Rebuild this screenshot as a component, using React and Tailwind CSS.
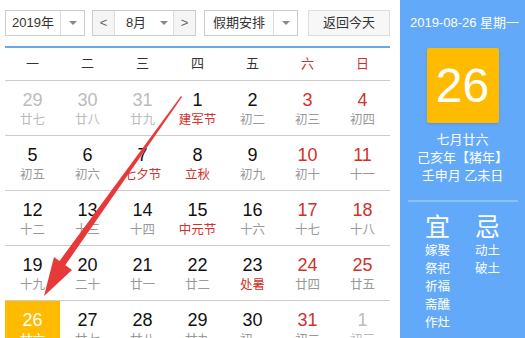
import React from 'react'

const FONT = { fontFamily: '"Microsoft YaHei", "Liberation Sans", "Noto Sans CJK SC", sans-serif' }

const weeks = [
  [['29', '廿七', 'o'], ['30', '廿八', 'o'], ['31', '廿九', 'o'], ['1', '建军节', 'f'], ['2', '初二'], ['3', '初三', 'w'], ['4', '初四', 'w']],
  [['5', '初五'], ['6', '初六'], ['7', '七夕节', 'f'], ['8', '立秋', 'f'], ['9', '初九'], ['10', '初十', 'w'], ['11', '十一', 'w']],
  [['12', '十二'], ['13', '十三'], ['14', '十四'], ['15', '中元节', 'f'], ['16', '十六'], ['17', '十七', 'w'], ['18', '十八', 'w']],
  [['19', '十九'], ['20', '二十'], ['21', '廿一'], ['22', '廿二'], ['23', '处暑', 'f'], ['24', '廿四', 'w'], ['25', '廿五', 'w']],
  [['26', '廿六', 't'], ['27', '廿七'], ['28', '廿八'], ['29', '廿九'], ['30', '初一'], ['31', '初二', 'w'], ['1', '初三', 'o']],
]

function Caret() {
  return <span className="w-0 h-0 border-l-[4px] border-r-[4px] border-t-[4px] border-l-transparent border-r-transparent border-t-[#888]" />
}

function DayCell({ d }) {
  const [num, lunar, kind] = d
  const numColor = kind === 'o' ? 'text-[#bbb]' : kind === 'w' ? 'text-[#d0312d]' : kind === 't' ? 'text-white' : 'text-[#111]'
  const lunarColor = kind === 'o' ? 'text-[#bbb]' : kind === 'f' ? 'text-[#d0312d]' : kind === 't' ? 'text-white' : 'text-[#999]'
  return (
    <div className={`flex flex-col items-center pt-[8px] ${kind === 't' ? 'bg-[#ffbb00]' : ''}`}>
      <div className={`text-[18px] leading-[22px] ${numColor}`}>{num}</div>
      <div className={`text-[12.5px] leading-[18px] ${lunarColor}`}>{lunar}</div>
    </div>
  )
}

export default function App() {
  return (
    <div className="w-[525px] h-[338px] overflow-hidden bg-white flex relative" style={FONT}>
      <div className="w-[400px] pl-[5px] pr-[10px] pt-[10px]">
        {/* toolbar */}
        <div className="flex items-center text-[13px] text-[#333] h-[26px]">
          <div className="w-[80px] h-[26px] border border-[#ccc] flex">
            <div className="flex-1 flex items-center justify-center">2019年</div>
            <div className="w-[24px] border-l border-[#ddd] flex items-center justify-center"><Caret /></div>
          </div>
          <div className="ml-[7px] w-[104px] h-[26px] border border-[#ccc] flex">
            <div className="w-[22px] bg-[#f5f5f5] border-r border-[#ddd] flex items-center justify-center text-[#666]">&lt;</div>
            <div className="flex-1 flex items-center justify-center gap-[14px] pl-[6px]">8月<Caret /></div>
            <div className="w-[22px] bg-[#f5f5f5] border-l border-[#ddd] flex items-center justify-center text-[#666]">&gt;</div>
          </div>
          <div className="ml-[8px] w-[94px] h-[26px] border border-[#ccc] flex">
            <div className="flex-1 flex items-center justify-center">假期安排</div>
            <div className="w-[24px] border-l border-[#ddd] flex items-center justify-center"><Caret /></div>
          </div>
          <div className="ml-[10px] w-[82px] h-[26px] border border-[#ddd] bg-[#f7f7f7] flex items-center justify-center">返回今天</div>
        </div>
        <div className="mt-[10px] border-t-[2px] border-[#6aa8e8]" />
        {/* weekday header */}
        <div className="grid grid-cols-7 h-[33px] items-center text-[13px] border-b border-[#ccc]">
          {['一', '二', '三', '四', '五', '六', '日'].map((w, i) => (
            <div key={w} className={`text-center ${i >= 5 ? 'text-[#d0312d]' : 'text-[#333]'}`}>{w}</div>
          ))}
        </div>
        {weeks.map((row, i) => (
          <div key={i} className="grid grid-cols-7 h-[55px] border-b border-[#ccc]">
            {row.map((d, j) => <DayCell key={j} d={d} />)}
          </div>
        ))}
      </div>
      {/* right panel */}
      <div className="w-[125px] bg-[#63a9f9] text-white flex flex-col items-center pt-[14px]">
        <div className="text-[13px] leading-[17px] pl-[4px]">2019-08-26 星期一</div>
        <div className="mt-[17px] w-[72px] h-[75px] bg-[#ffbb00] rounded-[2px] shadow-sm flex items-center justify-center text-[48px] leading-none">26</div>
        <div className="mt-[8px] text-[13px] leading-[18px] text-center">
          <div>七月廿六</div>
          <div>己亥年【猪年】</div>
          <div>壬申月 乙未日</div>
        </div>
        <div className="mt-[15px] w-[110px] border-t-[2px] border-[#8cc0fb]" />
        <div className="mt-[10px] flex gap-[25px]">
          <div className="flex flex-col items-center">
            <div className="text-[25px] leading-[30px]">宜</div>
            <div className="text-[12.5px] leading-[18px] flex flex-col items-center">
              <span>嫁娶</span><span>祭祀</span><span>祈福</span><span>斋醮</span><span>作灶</span>
            </div>
          </div>
          <div className="flex flex-col items-center">
            <div className="text-[25px] leading-[30px]">忌</div>
            <div className="text-[12.5px] leading-[18px] flex flex-col items-center">
              <span>动土</span><span>破土</span>
            </div>
          </div>
        </div>
      </div>
      {/* red arrow annotation */}
      <svg className="absolute left-0 top-0 pointer-events-none" width="525" height="338">
        <polygon points="181,96 182,97 64,267 58,263" fill="#e8393a" />
        <polygon points="44,296 54,257 72,270" fill="#e8393a" />
      </svg>
    </div>
  )
}
